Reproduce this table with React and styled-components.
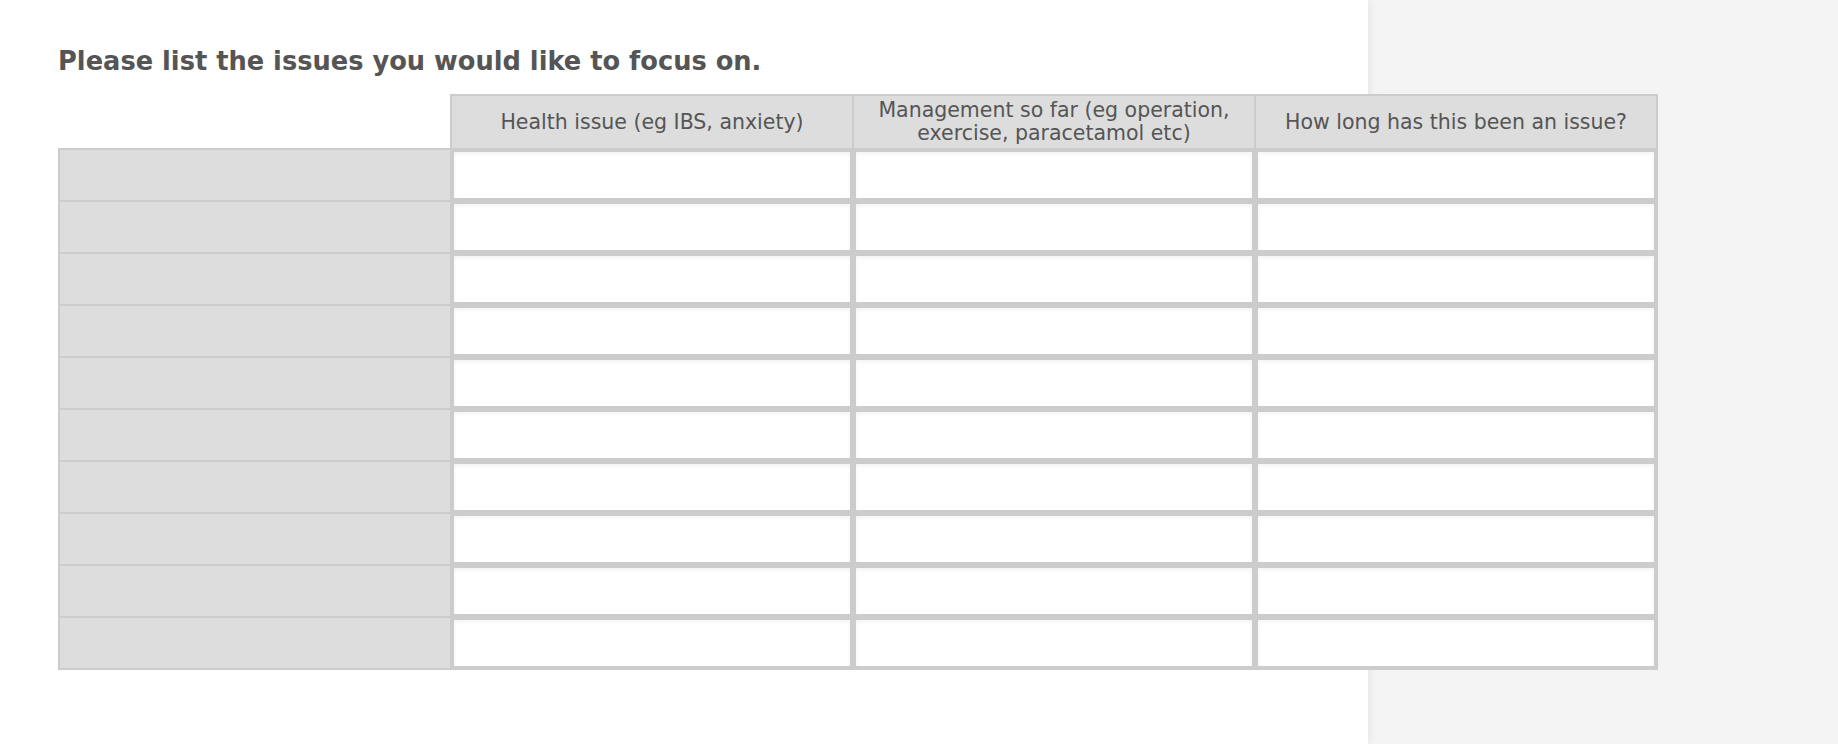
import React from 'react';
import styled, { createGlobalStyle } from 'styled-components';

const GlobalStyle = createGlobalStyle`
  html, body {
    margin: 0;
    padding: 0;
    background: #f4f4f4;
  }
  body {
    font-family: "DejaVu Sans", "Liberation Sans", sans-serif;
  }
`;

const columns = [
  { key: 'issue', label: 'Health issue (eg IBS, anxiety)' },
  { key: 'management', label: 'Management so far (eg operation, exercise, paracetamol etc)' },
  { key: 'duration', label: 'How long has this been an issue?' },
];

const ROWS = 10;

const App = () => {
  return (
    <Page>
      <GlobalStyle />
      <Main>
        <Title>Please list the issues you would like to focus on.</Title>
        <Matrix>
          <colgroup>
            <col style={{ width: 392 }} />
            <col style={{ width: 402 }} />
            <col style={{ width: 402 }} />
            <col style={{ width: 402 }} />
          </colgroup>
          <thead>
            <tr>
              <Corner />
              {columns.map((c) => (
                <HeadCell key={c.key}>{c.label}</HeadCell>
              ))}
            </tr>
          </thead>
          <tbody>
            {Array.from({ length: ROWS }).map((_, i) => (
              <tr key={i}>
                <RowLabel />
                {columns.map((c) => (
                  <InputCell key={c.key}>
                    <TextBox type="text" aria-label={`${c.label} ${i + 1}`} />
                  </InputCell>
                ))}
              </tr>
            ))}
          </tbody>
        </Matrix>
      </Main>
    </Page>
  );
};

const Page = styled.div`
  display: flex;
  min-height: 744px;
  background: #f4f4f4;
`;

const Main = styled.div`
  width: 1368px;
  flex-shrink: 0;
  background: #ffffff;
  box-shadow: 3px 0 8px rgba(0, 0, 0, 0.05);
  padding: 43px 0 0 58px;
  box-sizing: border-box;
`;

const Title = styled.h2`
  margin: 0 0 15px;
  font-size: 25.7px;
  line-height: 36px;
  font-weight: bold;
  color: #555555;
`;

const Matrix = styled.table`
  border-collapse: collapse;
  table-layout: fixed;
  width: 1598px;
`;

const Corner = styled.th`
  border: none;
  padding: 0;
`;

const HeadCell = styled.th`
  background: #dddddd;
  border: 2px solid #cccccc;
  height: 52px;
  padding: 0 6px;
  font-size: 20.5px;
  line-height: 23px;
  font-weight: normal;
  color: #555555;
  text-align: center;
  vertical-align: middle;
`;

const RowLabel = styled.td`
  background: #dddddd;
  border: 2px solid #cccccc;
  padding: 0;
`;

const InputCell = styled.td`
  border: 2px solid #cccccc;
  padding: 0;
`;

const TextBox = styled.input`
  display: block;
  width: 100%;
  height: 50px;
  box-sizing: border-box;
  margin: 0;
  border: 2px solid #cccccc;
  background: #ffffff;
  box-shadow: inset 0 2px 4px rgba(0, 0, 0, 0.05);
  outline: none;
  font-family: inherit;
  font-size: 16px;
  color: #555555;
  padding: 0 8px;
`;

export default App;
